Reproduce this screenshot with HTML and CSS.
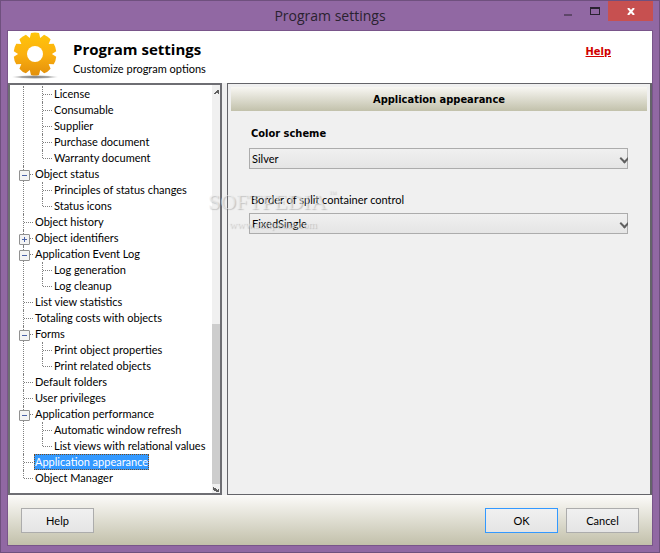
FILE: index.html
```html
<!DOCTYPE html>
<html lang="en">
<head>
<meta charset="utf-8">
<title>Program settings</title>
<link rel="stylesheet" href="styles.css">
</head>
<body>
<div class="window">
  <header class="titlebar">
    <h1 class="window-title">Program settings</h1>
    <div class="window-controls">
      <button class="control" type="button" aria-label="Minimize"><svg width="10" height="10" viewBox="0 0 10 10"><path d="M1 8h8v2H1z" fill="#5e4669"/></svg></button>
      <button class="control" type="button" aria-label="Maximize"><svg width="10" height="8" viewBox="0 0 10 8"><path fill="#2a2230" fill-rule="evenodd" d="M0 0h10v8H0zM1 2v5h8V2z"/></svg></button>
      <button class="control close" type="button" aria-label="Close"><svg width="8" height="7" viewBox="0 0 8 7"><path d="M1 0l6 7M7 0L1 7" stroke="#fff" stroke-width="2" fill="none"/></svg></button>
    </div>
  </header>

  <div class="client">
    <div class="intro">
      <svg class="gear" width="48" height="48" viewBox="0 0 48 48" aria-hidden="true">
        <defs>
          <linearGradient id="gold" x1="0" y1="0" x2="0" y2="1">
            <stop offset="0" stop-color="#ffc60a"/>
            <stop offset="0.5" stop-color="#fbb00f"/>
            <stop offset="1" stop-color="#e08c0b"/>
          </linearGradient>
          <radialGradient id="shade">
            <stop offset="0" stop-color="#777"/>
            <stop offset="0.6" stop-color="#aaa"/>
            <stop offset="1" stop-color="#ddd" stop-opacity="0"/>
          </radialGradient>
          <path id="tooth" d="M18 10L20 2Q24 1 28 2L30 10z"/>
          <clipPath id="cog">
            <circle cx="24" cy="23" r="16"/>
            <use href="#tooth"/>
            <use href="#tooth" transform="rotate(36 24 23)"/>
            <use href="#tooth" transform="rotate(72 24 23)"/>
            <use href="#tooth" transform="rotate(108 24 23)"/>
            <use href="#tooth" transform="rotate(144 24 23)"/>
            <use href="#tooth" transform="rotate(180 24 23)"/>
            <use href="#tooth" transform="rotate(216 24 23)"/>
            <use href="#tooth" transform="rotate(252 24 23)"/>
            <use href="#tooth" transform="rotate(288 24 23)"/>
            <use href="#tooth" transform="rotate(324 24 23)"/>
          </clipPath>
        </defs>
        <ellipse cx="24" cy="46" rx="24" ry="2" fill="url(#shade)"/>
        <rect width="48" height="47" fill="url(#gold)" clip-path="url(#cog)"/>
        <circle cx="24" cy="23" r="8" fill="#fff"/>
      </svg>
      <div class="intro-text">
        <h2>Program settings</h2>
        <p>Customize program options</p>
      </div>
      <a class="help-link" href="#help">Help</a>
    </div>

    <main class="split">
      <nav class="tree-panel" aria-label="Settings">
        <ul class="tree">
          <li>
            <ul>
              <li><span>License</span></li>
              <li><span>Consumable</span></li>
              <li><span>Supplier</span></li>
              <li><span>Purchase document</span></li>
              <li><span>Warranty document</span></li>
            </ul>
          </li>
          <li><span class="node">Object status</span>
            <ul>
              <li><span>Principles of status changes</span></li>
              <li><span>Status icons</span></li>
            </ul>
          </li>
          <li><span>Object history</span></li>
          <li><span class="node closed">Object identifiers</span></li>
          <li><span class="node">Application Event Log</span>
            <ul>
              <li><span>Log generation</span></li>
              <li><span>Log cleanup</span></li>
            </ul>
          </li>
          <li><span>List view statistics</span></li>
          <li><span>Totaling costs with objects</span></li>
          <li><span class="node">Forms</span>
            <ul>
              <li><span>Print object properties</span></li>
              <li><span>Print related objects</span></li>
            </ul>
          </li>
          <li><span>Default folders</span></li>
          <li><span>User privileges</span></li>
          <li><span class="node">Application performance</span>
            <ul>
              <li><span>Automatic window refresh</span></li>
              <li><span>List views with relational values</span></li>
            </ul>
          </li>
          <li><span class="selected">Application appearance</span></li>
          <li><span>Object Manager</span></li>
        </ul>
        <div class="scrollbar" aria-hidden="true">
          <svg width="6" height="5" viewBox="0 0 6 5"><path d="M0 4h1V3h1V2h1V1h1V0h2v4H5V3H3v1z" fill="#606060"/></svg>
          <div class="thumb"></div>
          <svg width="6" height="5" viewBox="0 0 6 5"><path d="M0 0h1v1h2v1h1v1h1V2h1v3H3V4H1V3H0z" fill="#606060"/></svg>
        </div>
      </nav>

      <section class="settings">
        <h2 class="banner">Application appearance</h2>
        <div class="fields">
          <div class="field">
            <label class="strong" for="scheme">Color scheme</label>
            <div class="combo"><select id="scheme"><option>Silver</option></select></div>
          </div>
          <div class="field">
            <label for="border">Border of split container control</label>
            <div class="combo"><select id="border"><option>FixedSingle</option></select></div>
          </div>
        </div>
      </section>
      <div class="watermark"><b>SOFTPEDIA</b><i>™</i><small>www.softpedia.com</small></div>
    </main>

    <footer class="actions">
      <button type="button">Help</button>
      <button class="default" type="button">OK</button>
      <button type="button">Cancel</button>
    </footer>
  </div>
</div>
</body>
</html>
```
FILE: styles.css
```css
* {
  box-sizing: border-box;
}

body {
  margin: 0;
  font: 11px/16px Lato, "Liberation Sans", sans-serif;
  color: #000;
}

h1, h2, p, ul {
  margin: 0;
  padding: 0;
}

button, select {
  font: inherit;
  color: inherit;
}

.window {
  display: flex;
  flex-direction: column;
  min-height: 100vh;
  padding: 0 6px 6px;
  border: 1px solid #6f507e;
  background: #9168a3;
}

.titlebar {
  display: grid;
  grid-template-columns: 1fr auto 1fr;
  height: 29px;
}

.window-title {
  grid-column: 2;
  font: 14px/29px "Open Sans", "Noto Sans", sans-serif;
  color: #2a2230;
}

.window-controls {
  display: flex;
  justify-content: flex-end;
  height: 20px;
}

.control {
  display: flex;
  align-items: center;
  justify-content: center;
  width: 27px;
  padding: 0;
  border: 0;
  background: none;
}

.close {
  width: 45px;
  background: #c75050;
}

.client {
  flex: 1;
  display: flex;
  flex-direction: column;
  border: 1px solid #79558a;
  background: #f0f0f0;
}

.intro {
  display: flex;
  height: 52px;
  padding-left: 3px;
  background: #fff;
}

.intro-text {
  flex: 1;
  padding: 8px 0 0 14px;
}

.intro-text h2 {
  font: bold 15px/20px "Open Sans", "Noto Sans", sans-serif;
}

.intro-text p {
  padding-top: 2px;
}

.help-link,
.banner,
.field .strong {
  font-family: "DejaVu Sans Condensed", "DejaVu Sans", sans-serif;
  font-size: 11px;
  font-weight: bold;
}

.help-link {
  margin: 13px 41px 0 0;
  color: #d00000;
}

.split {
  position: relative;
  flex: 1;
  display: grid;
  grid-template-columns: 214px 1fr;
  gap: 5px;
}

.tree-panel {
  display: flex;
  min-width: 0;
  border: 2px solid #6e6e73;
  background: #fff;
}

.tree {
  flex: 1;
  min-width: 0;
  padding: 1px 0 7px 12px;
  white-space: nowrap;
}

.tree,
.tree ul {
  list-style: none;
}

.tree ul {
  padding-left: 7px;
}

.tree li {
  position: relative;
  padding-left: 12px;
}

.tree li::before {
  content: "";
  position: absolute;
  top: 0;
  bottom: 0;
  left: 1px;
  border-left: 1px dotted #808080;
}

.tree li:last-child::before {
  bottom: auto;
  height: 8px;
}

.tree span {
  display: inline-block;
  height: 16px;
  padding: 0 1px;
  vertical-align: top;
}

.tree span::before {
  content: "";
  position: absolute;
  top: 8px;
  left: 2px;
  width: 9px;
  border-top: 1px dotted #808080;
}

.tree .node::after {
  content: "";
  position: absolute;
  top: 4px;
  left: -3px;
  width: 9px;
  height: 9px;
  border: 1px solid #919191;
  border-radius: 1px;
  background: linear-gradient(#4b63a7, #4b63a7) center / 5px 1px no-repeat, #f4f4f4;
}

.tree .closed::after {
  background:
    linear-gradient(#4b63a7, #4b63a7) center / 5px 1px no-repeat,
    linear-gradient(#4b63a7, #4b63a7) center / 1px 5px no-repeat,
    #f4f4f4;
}

.tree .selected {
  padding: 0;
  border: 1px dotted #7a4a1a;
  line-height: 14px;
  background: #3399ff;
  color: #fff;
}

.scrollbar {
  display: flex;
  flex-direction: column;
  align-items: center;
  width: 8px;
  padding: 5px 0 1px;
  background: #f0f0f0;
}

.thumb {
  width: 8px;
  height: 160px;
  margin: auto 0 3px;
  background: #cdcdcd;
}

.settings {
  padding: 3px;
  border: 1px solid #646469;
  border-right-width: 2px;
}

.banner {
  line-height: 26px;
  height: 24px;
  text-align: center;
  background: linear-gradient(#f8f7f3, #c2c1ab);
}

.fields {
  display: grid;
  gap: 20px;
  padding: 12px 19px 0 18px;
}

.field label {
  display: block;
  height: 24px;
  padding: 3px 2px 0;
}

.field .strong {
  height: 25px;
}

.combo {
  position: relative;
  overflow: hidden;
}

.combo select {
  display: block;
  appearance: none;
  width: 100%;
  height: 21px;
  padding: 0 2px;
  border: 1px solid #acacac;
  border-radius: 0;
  background: linear-gradient(#f0f0f0, #e5e5e5);
}

.combo::after {
  content: "";
  position: absolute;
  top: 7px;
  right: 0;
  width: 5px;
  height: 5px;
  border: solid #606060;
  border-width: 0 2px 2px 0;
  transform: rotate(45deg);
}

.watermark {
  position: absolute;
  top: 107px;
  left: 200px;
  display: grid;
  grid-template-columns: auto auto;
  column-gap: 2px;
  font-family: "Liberation Serif", serif;
  color: rgba(240, 240, 240, 0.6);
  text-shadow: 1px 1px 1px rgba(130, 130, 130, 0.4);
  pointer-events: none;
}

.watermark b {
  font-size: 22px;
  font-weight: normal;
  line-height: 24px;
}

.watermark i {
  font-size: 8px;
  font-style: normal;
  line-height: 8px;
}

.watermark small {
  grid-column: 1 / -1;
  padding-left: 21px;
  font-size: 11px;
  line-height: 20px;
}

.actions {
  display: flex;
  gap: 8px;
  height: 50px;
  padding: 13px 13px 12px;
  background: linear-gradient(#fcfbf9, #c2c0aa);
}

.actions button {
  width: 73px;
  height: 25px;
  padding: 0;
  border: 1px solid #acacac;
  background: linear-gradient(#f0f0f0, #e5e5e5);
}

.actions .default {
  margin-left: auto;
  border-color: #3399ff;
}
```
